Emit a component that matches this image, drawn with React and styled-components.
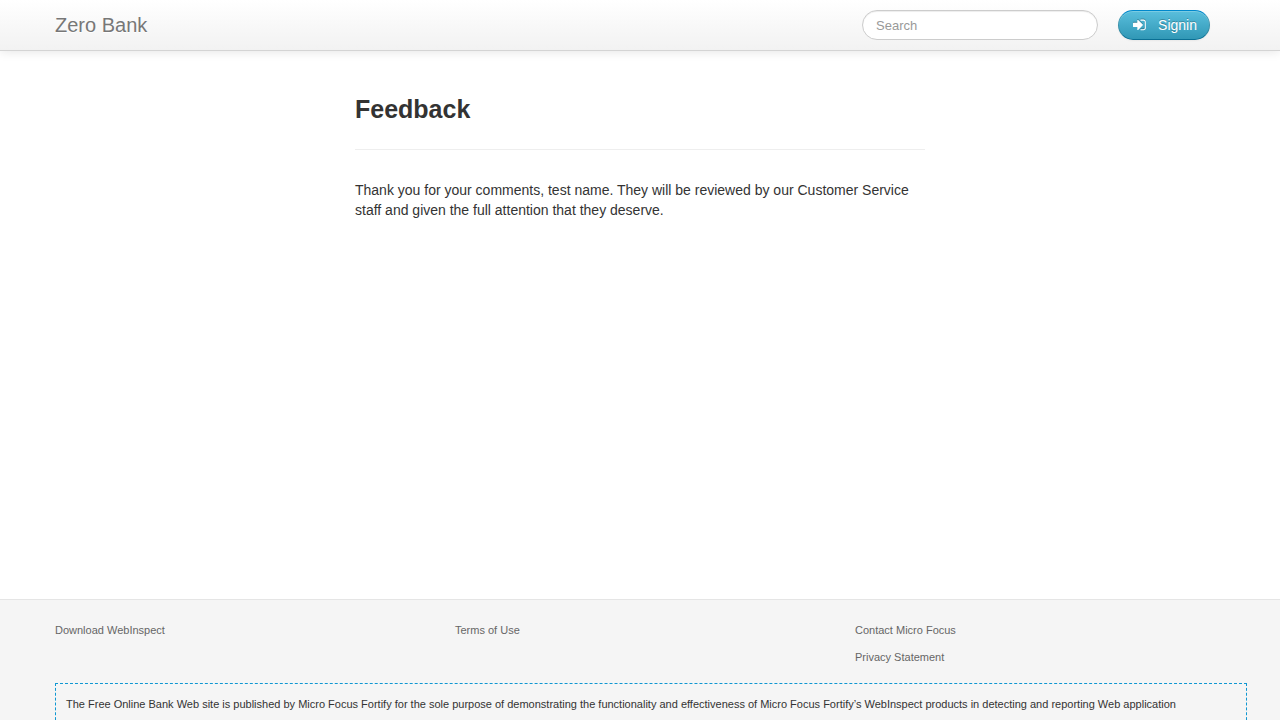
import React from "react";
import styled, { createGlobalStyle } from "styled-components";

const GlobalStyle = createGlobalStyle`
  * { box-sizing: border-box; }
  body {
    margin: 0;
    background: #fff;
    color: #333;
    font-family: "Liberation Sans", Arial, sans-serif;
    font-size: 14px;
    line-height: 20px;
  }
`;

const Page = styled.div`
  height: 100vh;
  overflow: hidden;
`;

const Container = styled.div`
  max-width: 1170px;
  margin: 0 auto;
`;

const Navbar = styled.header`
  background: linear-gradient(to bottom, #ffffff, #f2f2f2);
  border-bottom: 1px solid #d4d4d4;
  box-shadow: 0 1px 10px rgba(0, 0, 0, 0.1);
`;

const NavRow = styled(Container)`
  display: flex;
  align-items: center;
  gap: 20px;
  padding: 10px 15px 10px 0;
`;

const Brand = styled.a`
  margin-right: auto;
  font-size: 20px;
  line-height: 30px;
  color: #777;
  text-decoration: none;
  text-shadow: 0 1px 0 #fff;
`;

const SearchInput = styled.input`
  width: 236px;
  height: 30px;
  padding: 4px 13px;
  border: 1px solid #ccc;
  border-radius: 15px;
  background: #fff;
  color: #555;
  font-family: inherit;
  font-size: 13px;
  line-height: 20px;
  box-shadow: inset 0 1px 1px rgba(0, 0, 0, 0.075);

  &::placeholder {
    color: #999;
    opacity: 1;
  }
`;

const SigninButton = styled.button`
  display: flex;
  align-items: center;
  gap: 10px;
  height: 30px;
  padding: 4px 12px 4px 14px;
  border: 1px solid;
  border-color: #0088cc rgba(0, 0, 0, 0.15) #0a6f94;
  border-radius: 15px;
  background: linear-gradient(to bottom, #5bc0de, #2f96b4) border-box;
  color: #fff;
  font-family: inherit;
  font-size: 14px;
  line-height: 20px;
  text-shadow: 0 -1px 0 rgba(0, 0, 0, 0.25);
  box-shadow: inset 0 1px 0 rgba(255, 255, 255, 0.2), 0 1px 2px rgba(0, 0, 0, 0.05);
  cursor: pointer;

  svg {
    filter: drop-shadow(0 -1px 0 rgba(0, 0, 0, 0.25));
  }
`;

const Main = styled.main`
  min-height: 548px;
  padding: 38px 20px 0;
`;

const Content = styled.section`
  max-width: 570px;
  margin: 0 auto;
`;

const PageHeader = styled.div`
  padding-bottom: 20px;
  margin-bottom: 30px;
  border-bottom: 1px solid #eee;
`;

const Title = styled.h1`
  margin: 0;
  font-size: 25px;
  line-height: 40px;
  font-weight: bold;
`;

const Message = styled.p`
  margin: 0;
`;

const Footer = styled.footer`
  border-top: 1px solid #e5e5e5;
  background: #f5f5f5;
  padding: 20px 0;
  font-size: 11px;
`;

const LinkColumns = styled(Container)`
  display: grid;
  grid-template-columns: repeat(3, 1fr);
  gap: 30px;
`;

const LinkList = styled.ul`
  display: flex;
  flex-direction: column;
  gap: 7px;
  margin: 0;
  padding: 0;
  list-style: none;
`;

const FooterLink = styled.a`
  color: #666;
  text-decoration: none;
`;

const Disclaimer = styled.div`
  margin: 16px -22px 0 0;
  padding: 10px;
  border: 1px dashed #0f97d2;
`;

const footerColumns = [
  ["Download WebInspect"],
  ["Terms of Use"],
  ["Contact Micro Focus", "Privacy Statement"],
];

function SigninIcon() {
  return (
    <svg width="15" height="15" viewBox="0 0 1792 1792" fill="currentColor" aria-hidden="true">
      <path d="M1184 832q0 26-19 45l-544 544q-19 19-45 19t-45-19-19-45v-288h-448q-26 0-45-19t-19-45v-384q0-26 19-45t45-19h448v-288q0-26 19-45t45-19 45 19l544 544q19 19 19 45zm352-352v704q0 119-84.500 203.500t-203.500 84.500h-320q-13 0-22.500-9.500t-9.500-22.500q0-4-1-20t-.5-26.500 3-23.500 10-19.500 20.500-6.500h320q66 0 113-47t47-113v-704q0-66-47-113t-113-47h-312l-11.500-1-11.500-3-8-5.500-7-9-2-13.500q0-4-1-20t-.5-26.500 3-23.500 10-19.500 20.500-6.500h320q119 0 203.500 84.500t84.500 203.500z" />
    </svg>
  );
}

export default function App() {
  return (
    <>
      <GlobalStyle />
      <Page>
        <Navbar>
          <NavRow>
            <Brand href="#">Zero Bank</Brand>
            <SearchInput type="text" placeholder="Search" aria-label="Search" />
            <SigninButton type="button">
              <SigninIcon />
              Signin
            </SigninButton>
          </NavRow>
        </Navbar>
        <Main>
          <Content>
            <PageHeader>
              <Title>Feedback</Title>
            </PageHeader>
            <Message>
              Thank you for your comments, test name. They will be reviewed by our Customer
              Service staff and given the full attention that they deserve.
            </Message>
          </Content>
        </Main>
        <Footer>
          <LinkColumns>
            {footerColumns.map((links) => (
              <LinkList key={links[0]}>
                {links.map((label) => (
                  <li key={label}>
                    <FooterLink href="#">{label}</FooterLink>
                  </li>
                ))}
              </LinkList>
            ))}
          </LinkColumns>
          <Container>
            <Disclaimer>
              The Free Online Bank Web site is published by Micro Focus Fortify for the sole
              purpose of demonstrating the functionality and effectiveness of Micro Focus
              Fortify’s WebInspect products in detecting and reporting Web application
            </Disclaimer>
          </Container>
        </Footer>
      </Page>
    </>
  );
}
